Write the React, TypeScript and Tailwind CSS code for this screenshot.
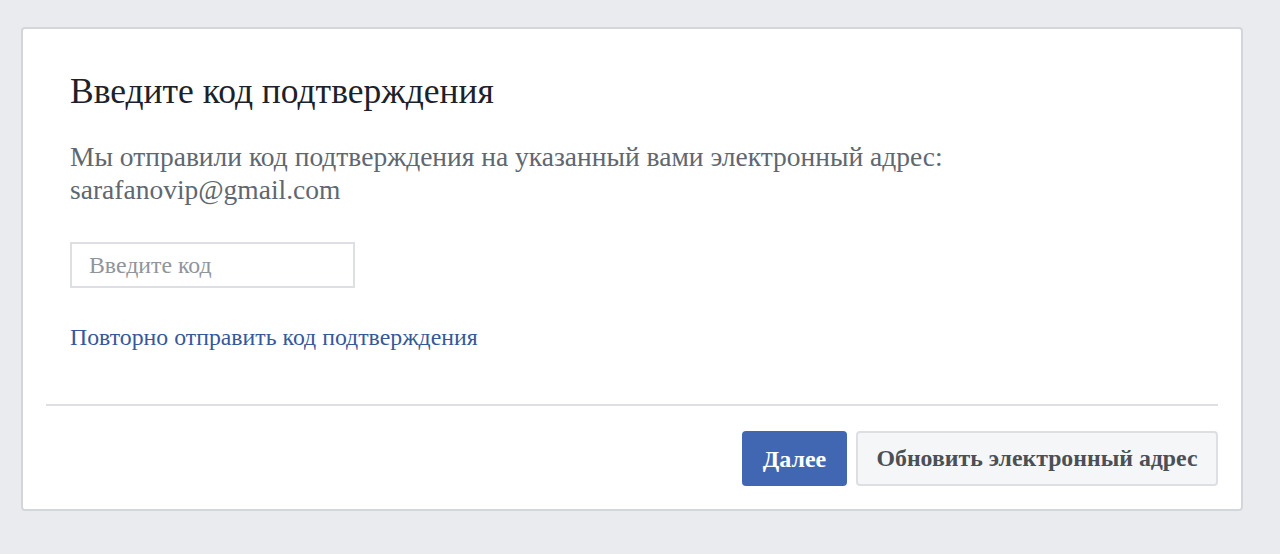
import React from "react";

const App: React.FC = () => {
  return (
    <div
      className="min-h-[554px] w-full bg-[#e9ebee] pt-[27px] pl-[21px] pr-[37px]"
      style={{ fontFamily: '"Liberation Serif", serif' }}
    >
      <div className="w-[1222px] h-[484px] rounded-[4px] border-2 border-[#d3d6db] bg-white">
        <div className="px-[47px] pt-[43px]">
          <h2 className="text-[35.5px] leading-[38px] text-[#1d2129]">
            Введите код подтверждения
          </h2>
          <p className="mt-[30px] text-[27.5px] leading-[33px] text-[#606770]">
            Мы отправили код подтверждения на указанный вами электронный адрес:
            <br />
            sarafanovip@gmail.com
          </p>
          <div className="mt-[36px]">
            <input
              type="text"
              placeholder="Введите код"
              className="w-[285px] h-[46px] border-2 border-[#dddfe2] px-[17px] text-[23.8px] text-[#1d2129] placeholder:text-[#90949c] outline-none"
            />
          </div>
          <a href="#" className="mt-[35px] block text-[23.8px] leading-[28px] text-[#365899]">
            Повторно отправить код подтверждения
          </a>
        </div>
        <div className="mx-[23px] mt-[53px] border-t-2 border-[#dddfe2]" />
        <div className="flex justify-end gap-[9px] px-[23px] pt-[25px]">
          <button className="h-[55px] w-[105px] rounded-[4px] bg-[#4267b2] text-[24px] font-bold text-white">
            Далее
          </button>
          <button className="h-[55px] w-[362px] rounded-[4px] border-2 border-[#dddfe2] bg-[#f5f6f7] text-[23.8px] font-bold text-[#4b4f56]">
            Обновить электронный адрес
          </button>
        </div>
      </div>
    </div>
  );
};

export default App;
